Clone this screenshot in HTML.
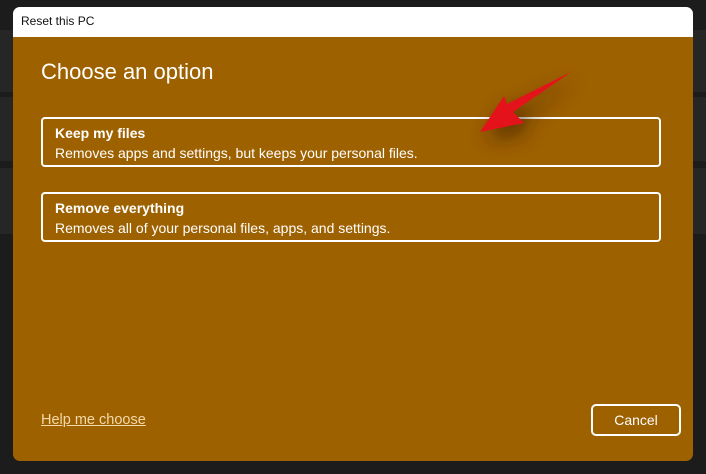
<html><head><style>
body{margin:0;width:706px;height:474px;background:#1c1c1c;position:relative;overflow:hidden;font-family:"Liberation Sans",sans-serif}
.p{position:absolute;background:#262626;border-radius:4px}
.dlg{position:absolute;left:13px;top:7px;width:680px;height:454px;border-radius:7px;overflow:hidden;background:#9e6100}
.tb{height:30px;background:#fff;color:#111;font-size:12px;line-height:28px;padding-left:8px}
h1{position:absolute;left:28px;top:52px;margin:0;font-weight:normal;font-size:22px;color:#fff}
.box{position:absolute;left:28px;width:616px;height:46px;border:2px solid #fff;border-radius:4px;color:#fff;font-size:14px}
.box b{position:absolute;left:12px;top:6px}
.box span{position:absolute;left:12px;top:26px}
.help{position:absolute;left:28px;top:405px;color:#f3d9a8;font-size:14.5px;text-decoration:underline}
.cancel{position:absolute;left:578px;top:397px;width:86px;height:28px;border:2px solid #fff;border-radius:5px;color:#fff;font-size:14px;text-align:center;line-height:28px}
</style></head><body>
<div class="p" style="left:-4px;top:30px;width:20px;height:62px"></div>
<div class="p" style="left:-4px;top:97px;width:20px;height:64px"></div>
<div class="p" style="left:-4px;top:168px;width:20px;height:66px"></div>
<div class="p" style="left:690px;top:30px;width:20px;height:62px"></div>
<div class="p" style="left:690px;top:97px;width:20px;height:64px"></div>
<div class="p" style="left:690px;top:168px;width:20px;height:66px"></div>
<div class="dlg">
<div class="tb">Reset this PC</div>
<h1>Choose an option</h1>
<div class="box" style="top:110px"><b>Keep my files</b><span>Removes apps and settings, but keeps your personal files.</span></div>
<div class="box" style="top:185px"><b>Remove everything</b><span>Removes all of your personal files, apps, and settings.</span></div>
<div class="help">Help me choose</div>
<div class="cancel">Cancel</div>
</div>
<svg style="position:absolute;left:0;top:0" width="706" height="474">
<defs><filter id="f" x="-1" y="-1" width="3" height="3"><feGaussianBlur stdDeviation="10"/></filter></defs>
<path d="M480 132 L504 96 L507 104 L571 72 L513 112 L524 123 Z" fill="#3a1c00" opacity=".75" filter="url(#f)" transform="translate(6,8)"/>
<path d="M480 132 L504 96 L507 104 L571 72 L513 112 L524 123 Z" fill="#e3121b"/>
</svg>
</body></html>
